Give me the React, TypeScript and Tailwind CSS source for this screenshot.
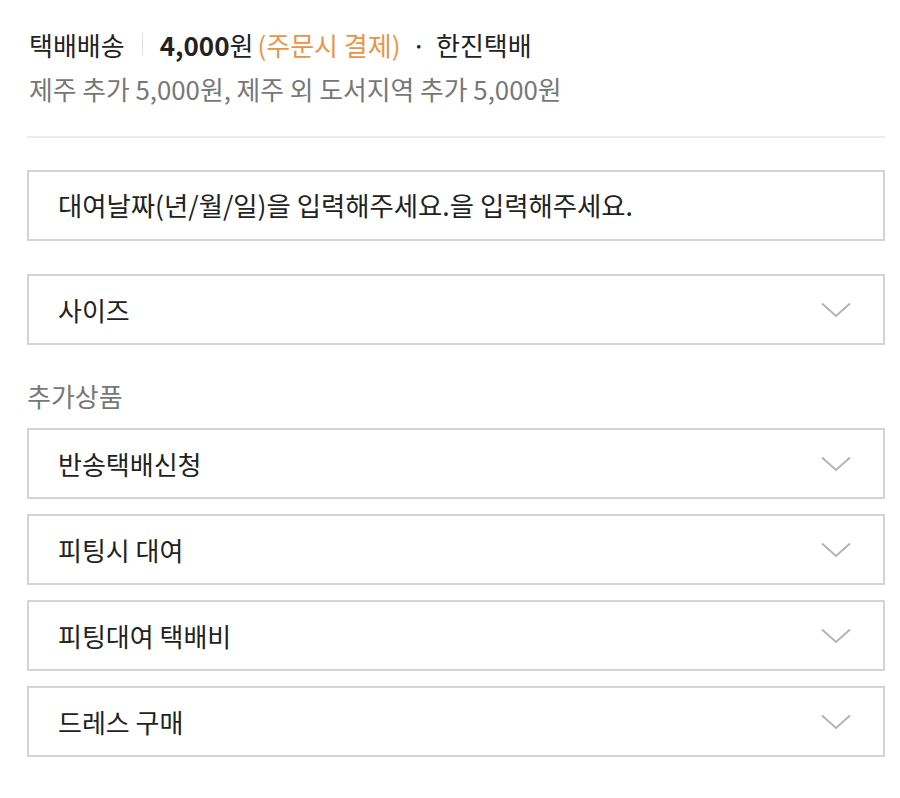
import React from "react";

const font = { fontFamily: '"Noto Sans CJK KR", "Noto Sans", sans-serif' };

function Chevron() {
  return (
    <svg width="30" height="16" viewBox="0 0 30 16" fill="none" className="shrink-0">
      <path d="M1 1.5 L15 14 L29 1.5" stroke="#b4b4b4" strokeWidth="2" fill="none" />
    </svg>
  );
}

function SelectBox({ label }: { label: string }) {
  return (
    <div className="flex h-[71px] items-center justify-between border-2 border-[#d4d4d4] bg-white pl-[29px] pr-[32px]">
      <span className="text-[26px] leading-none text-[#222]">{label}</span>
      <Chevron />
    </div>
  );
}

export default function App() {
  return (
    <div className="min-h-[798px] w-[900px] bg-white pl-[27px] pr-[15px] pt-[27px]" style={font}>
      <div className="flex h-[34px] items-center pl-[2px] text-[26px] text-[#222]">
        <span>택배배송</span>
        <span className="ml-[17px] mr-[17px] h-[22px] w-px bg-[#dcdcdc]" />
        <span className="font-bold">4,000</span>
        <span>원</span>
        <span className="ml-[4px] text-[#e8954a]">(주문시 결제)</span>
        <span className="ml-[11px]">·</span>
        <span className="ml-[10px]">한진택배</span>
      </div>
      <div className="mt-[11px] flex h-[34px] items-center pl-[2px] text-[25.8px] text-[#777]">
        제주 추가 5,000원, 제주 외 도서지역 추가 5,000원
      </div>
      <div className="mt-[30px] h-[2px] bg-[#ebebeb]" />
      <div className="mt-[32px] flex h-[71px] items-center border-2 border-[#d4d4d4] bg-white pl-[29px]">
        <span className="text-[26.4px] leading-none text-[#222]">대여날짜(년/월/일)을 입력해주세요.을 입력해주세요.</span>
      </div>
      <div className="mt-[33px]">
        <SelectBox label="사이즈" />
      </div>
      <div className="mt-[33px] flex h-[34px] items-center text-[26px] text-[#777]">추가상품</div>
      <div className="mt-[16px] flex flex-col gap-[15px]">
        <SelectBox label="반송택배신청" />
        <SelectBox label="피팅시 대여" />
        <SelectBox label="피팅대여 택배비" />
        <SelectBox label="드레스 구매" />
      </div>
    </div>
  );
}
